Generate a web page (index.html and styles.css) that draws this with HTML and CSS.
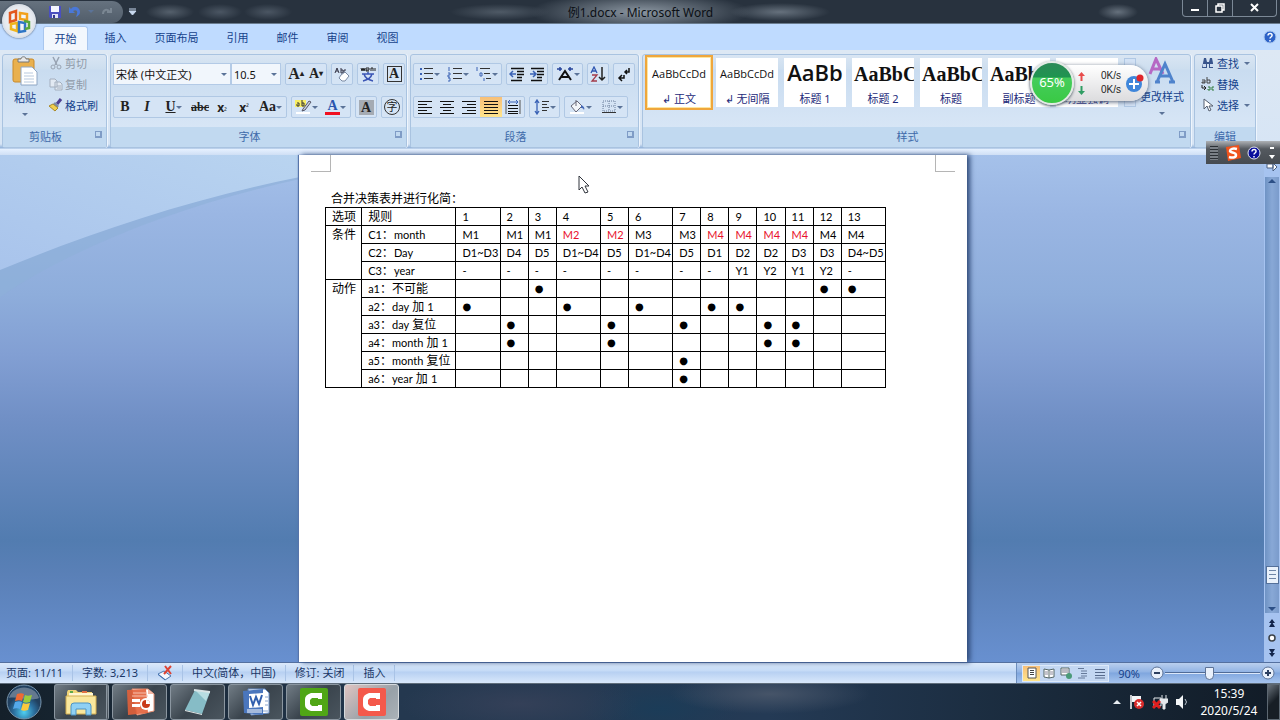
FILE: index.html
```html
<!DOCTYPE html>
<html lang="zh-CN">
<head>
    <meta charset="utf-8">
    <title>例1.docx - Microsoft Word</title>
    <link rel="stylesheet" href="styles.css">
</head>
<body>
<div class="window">

    <header class="titlebar">
        <div class="quick">
            <button class="plain" aria-label="保存"><svg width="14" height="14" viewBox="0 0 14 14"><path d="M1 1h12v12H2l-1-1z" fill="#4a4fc0"/><path d="M3 1h8v6H3z" fill="#f4f6ff"/><path d="M4 9h6v4H4z" fill="#dfe3f5"/><path d="M5 10h2v3H5z" fill="#30358f"/></svg></button>
            <button class="plain" aria-label="撤消"><svg width="14" height="14" viewBox="0 0 14 14"><path d="M1 2v6h6L5 6c3-2 5 0 4 3l-1 3c4-2 5-5 3-8S5 1 3 4z" fill="#4a78d8"/></svg></button>
            <i class="caret"></i>
            <button class="plain redo" aria-label="恢复"><svg width="14" height="14" viewBox="0 0 14 14"><path d="M11 3v4H7M10 7C7 3 3 5 3 9" fill="none" stroke="#7b8793" stroke-width="2"/></svg></button>
        </div>
        <button class="plain more" aria-label="自定义快速访问工具栏"><svg width="9" height="8" viewBox="0 0 9 8"><path d="M1 1h7M1 3h7L4.500 7z" fill="#c8d8ee" stroke="#c8d8ee"/></svg></button>
        <h1 class="title">例1.docx - Microsoft Word</h1>
        <div class="winbtns">
            <button aria-label="最小化"><svg width="12" height="10" viewBox="0 0 12 10"><path d="M2 6h8v2H2z" fill="#fff"/></svg></button>
            <button aria-label="还原"><svg width="12" height="10" viewBox="0 0 12 10"><path d="M4 3V1h6v6H8M2 3h6v6H2z" fill="none" stroke="#fff" stroke-width="1.500"/></svg></button>
            <button class="close" aria-label="关闭"><svg width="12" height="10" viewBox="0 0 12 10"><path d="M2 1l7 7M9 1L2 8" stroke="#fff" stroke-width="2"/></svg></button>
        </div>
    </header>

    <button class="office" aria-label="Office 按钮"><svg width="26" height="26" viewBox="0 0 26 26"><g fill="none" stroke-width="2.500"><path d="M4 5l6-2v9l-6 2z" stroke="#e2571e"/><path d="M14 5l7 1v6l-7-1z" stroke="#f2a11c"/><path d="M5 16l6-1v8l-6-2z" stroke="#f0b51d"/><path d="M13 14l6 1v8l-6 1z" stroke="#2f76c6"/><path d="M18 13l5 1v6l-4 1" stroke="#5aa83a"/></g></svg></button>

    <nav class="tabs">
        <a class="tab active" href="#home">开始</a>
        <a class="tab" href="#insert">插入</a>
        <a class="tab wide" href="#layout">页面布局</a>
        <a class="tab" href="#refs">引用</a>
        <a class="tab" href="#mail">邮件</a>
        <a class="tab" href="#review">审阅</a>
        <a class="tab" href="#view">视图</a>
        <button class="plain help" aria-label="帮助"><svg width="14" height="14" viewBox="0 0 14 14"><circle cx="7" cy="7" r="6" fill="#2c62c8" stroke="#a9c6ee"/><path d="M5 5.500c0-3 4.500-2.500 4 0C9 7 7 7 7 8.500M7 10v1.500" fill="none" stroke="#fff" stroke-width="1.500"/></svg></button>
    </nav>

    <section class="ribbon">
        <div class="group clipboard">
            <div class="body">
                <button class="paste">
                    <svg width="28" height="30" viewBox="0 0 28 30"><rect x="2" y="3" width="21" height="23" rx="2" fill="#e9b04e" stroke="#c98a2b"/><path d="M7 5V3h3c0-3 5-3 5 0h3v3H7z" fill="#e8e8e8" stroke="#777"/><path d="M10 11h11l5 5v13H10z" fill="#fff" stroke="#8ea6c4"/><path d="M13 17h9M13 20h10M13 23h10M13 26h10" stroke="#b8c9de"/></svg>
                    <span>粘贴</span>
                    <i class="caret"></i>
                </button>
                <div class="stack">
                    <button class="line off"><svg width="14" height="14" viewBox="0 0 14 14"><path d="M4 1l4 8M10 1L6 9" stroke="#98a3b2" stroke-width="1.500"/><circle cx="4" cy="11" r="2" fill="none" stroke="#98a3b2"/><circle cx="10" cy="11" r="2" fill="none" stroke="#98a3b2"/></svg>剪切</button>
                    <button class="line off"><svg width="14" height="14" viewBox="0 0 14 14"><path d="M1 2h5l2 2v6H1zM6 5h5l2 2v6H6z" fill="#e2e9f2" stroke="#a4afbe"/><path d="M8 9h4M8 11h4" stroke="#a4afbe"/></svg>复制</button>
                    <button class="line"><svg width="14" height="14" viewBox="0 0 14 14"><path d="M12 1L8 6" stroke="#4d3f91" stroke-width="3"/><path d="M6 4l4 4-2 2-4-4z" fill="#7c8ba6"/><path d="M4 6l5 4-3 3-6-5z" fill="#f0cf50" stroke="#a8892b"/></svg>格式刷</button>
                </div>
            </div>
            <div class="caption"><span>剪贴板</span><i class="launch"></i></div>
        </div>

        <div class="group font">
            <div class="body rows">
                <div class="row">
                    <div class="combos">
                        <label class="combo family"><select aria-label="字体"><option>宋体 (中文正文)</option></select></label>
                        <label class="combo size"><select aria-label="字号"><option>10.5</option></select></label>
                    </div>
                    <div class="set">
                        <button class="tool serif big" aria-label="增大字体">A<sup>▴</sup></button>
                        <button class="tool serif" aria-label="缩小字体">A<sup>▾</sup></button>
                    </div>
                    <div class="set"><button class="tool" aria-label="清除格式"><svg width="16" height="16" viewBox="0 0 16 16"><path d="M1 7l2-5 2 5M2 5h2M7 2v5M7 4h2v3H7M12 4h-2v3h2" fill="none" stroke="#334"/><path d="M7 9l4-3 4 4-4 5H8l-3-3z" fill="#fff" stroke="#7b8ba5"/></svg></button></div>
                    <div class="set"><button class="tool" aria-label="拼音指南"><svg width="16" height="16" viewBox="0 0 16 16"><path d="M1 2l1 3 1-3 1 3 1-3M6 4h3V2H6v3h3M11 5V2h2v3M15 2v3" fill="none" stroke="#222"/><path d="M2 8h12M8 6v2M4 8c1 4 5 6 9 7M12 8c-1 4-5 6-9 7" fill="none" stroke="#3b55b5" stroke-width="1.500"/></svg></button></div>
                    <div class="set"><button class="tool serif" aria-label="字符边框"><span class="boxed">A</span></button></div>
                </div>
                <div class="row">
                    <div class="set chars">
                        <button class="tool serif"><b>B</b></button>
                        <button class="tool serif"><em>I</em></button>
                        <button class="tool serif drop"><u>U</u><i class="caret"></i></button>
                        <button class="tool serif small"><s>abc</s></button>
                        <button class="tool small"><b>x</b><sub>₂</sub></button>
                        <button class="tool small"><b>x</b><sup>²</sup></button>
                        <button class="tool serif drop mid">Aa<i class="caret"></i></button>
                    </div>
                    <div class="set">
                        <button class="tool drop" aria-label="突出显示"><svg width="17" height="16" viewBox="0 0 17 16"><path d="M0 1h11v7H0z" fill="#f8ee63"/><path d="M2 4h2v3H2V5M7 1v6h2V4H7" fill="none" stroke="#333"/><path d="M8 10l6-8 2 1-6 8-3 1z" fill="#c9d2dd" stroke="#556"/><path d="M1 13h14v2H1z" fill="#fff"/></svg><i class="caret"></i></button>
                        <button class="tool serif drop"><span class="inked">A</span><i class="caret"></i></button>
                    </div>
                    <div class="set"><button class="tool serif" aria-label="字符底纹"><span class="shaded">A</span></button></div>
                    <div class="set"><button class="tool" aria-label="带圈字符"><span class="ringed">字</span></button></div>
                </div>
            </div>
            <div class="caption"><span>字体</span><i class="launch"></i></div>
        </div>

        <div class="group para">
            <div class="body rows">
                <div class="row">
                    <div class="set">
                        <button class="tool drop" aria-label="项目符号"><svg width="16" height="16" viewBox="0 0 16 16"><path d="M2 3h2M2 8h2M2 13h2" stroke="#3a62b5" stroke-width="2"/><path d="M6 2.500h9M6 7.500h9M6 12.500h9" stroke="#333"/></svg><i class="caret"></i></button>
                        <button class="tool drop" aria-label="编号"><svg width="16" height="16" viewBox="0 0 16 16"><path d="M2 1v4M1 7h2v2H1v2h2M1 12h2v3H1" fill="none" stroke="#3a62b5"/><path d="M6 2.500h9M6 7.500h9M6 12.500h9" stroke="#333"/></svg><i class="caret"></i></button>
                        <button class="tool drop" aria-label="多级列表"><svg width="16" height="16" viewBox="0 0 16 16"><path d="M1 1v4M4 7h2v3H4zM8 12v3" fill="none" stroke="#3a62b5"/><path d="M4 2.500h10M8 7.500h6M10 12.500h5" stroke="#333"/></svg><i class="caret"></i></button>
                    </div>
                    <div class="set">
                        <button class="tool" aria-label="减少缩进量"><svg width="16" height="16" viewBox="0 0 16 16"><path d="M2 2.500h13M8 5.500h7M8 8.500h7M8 11.500h5M2 14.500h11" stroke="#111" stroke-width="1.500"/><path d="M7 8H1M4 5L1 8l3 3" fill="none" stroke="#3a62b5" stroke-width="1.500"/></svg></button>
                        <button class="tool" aria-label="增加缩进量"><svg width="16" height="16" viewBox="0 0 16 16"><path d="M2 2.500h13M8 5.500h7M8 8.500h7M8 11.500h5M2 14.500h11" stroke="#111" stroke-width="1.500"/><path d="M1 8h6M4 5l3 3-3 3" fill="none" stroke="#3a62b5" stroke-width="1.500"/></svg></button>
                    </div>
                    <div class="set"><button class="tool drop" aria-label="中文版式"><svg width="18" height="16" viewBox="0 0 18 16"><path d="M3 14L9 5l6 9M5 11h8" fill="none" stroke="#111" stroke-width="2"/><path d="M1 3h5M4 1v4M12 3h5M14 1v4" stroke="#26439a" stroke-width="1.500"/></svg><i class="caret"></i></button></div>
                    <div class="set"><button class="tool" aria-label="排序"><svg width="16" height="16" viewBox="0 0 16 16"><path d="M1 7l3-6 3 6M2 5h4" fill="none" stroke="#2e56b0" stroke-width="1.300"/><path d="M2 9h5l-5 6h5" fill="none" stroke="#a23a4a" stroke-width="1.300"/><path d="M12 1v13M9 11l3 3 3-3" fill="none" stroke="#222" stroke-width="1.500"/></svg></button></div>
                    <div class="set"><button class="tool" aria-label="显示编辑标记"><svg width="16" height="16" viewBox="0 0 16 16"><path d="M13 2v4H9M11 4L9 6l2 2M8 9v3H3M6 9l-3 3 3 3" fill="none" stroke="#111" stroke-width="1.500"/></svg></button></div>
                </div>
                <div class="row">
                    <div class="set align">
                        <button class="tool" aria-label="左对齐"><svg width="16" height="16" viewBox="0 0 16 16"><path d="M1 2.500h14M1 5.500h9M1 8.500h14M1 11.500h9M1 14.500h14" stroke="#111"/></svg></button>
                        <button class="tool" aria-label="居中"><svg width="16" height="16" viewBox="0 0 16 16"><path d="M1 2.500h14M4 5.500h8M1 8.500h14M4 11.500h8M1 14.500h14" stroke="#111"/></svg></button>
                        <button class="tool" aria-label="右对齐"><svg width="16" height="16" viewBox="0 0 16 16"><path d="M1 2.500h14M6 5.500h9M1 8.500h14M6 11.500h9M1 14.500h14" stroke="#111"/></svg></button>
                        <button class="tool on" aria-label="两端对齐"><svg width="16" height="16" viewBox="0 0 16 16"><path d="M1 2.500h14M1 5.500h14M1 8.500h14M1 11.500h14M1 14.500h14" stroke="#111"/></svg></button>
                        <button class="tool" aria-label="分散对齐"><svg width="16" height="16" viewBox="0 0 16 16"><path d="M1 1v14M15 1v14" stroke="#555"/><path d="M3 3h10M5 1L3 3l2 2M11 1l2 2-2 2" fill="none" stroke="#3a62b5"/><path d="M3 6.500h10M3 9.500h10M3 12.500h10M3 14.500h10" stroke="#111"/></svg></button>
                    </div>
                    <div class="set"><button class="tool drop" aria-label="行距"><svg width="16" height="16" viewBox="0 0 16 16"><path d="M3 2v12M1 4l2-3 2 3M1 12l2 3 2-3" fill="none" stroke="#3a62b5" stroke-width="1.300"/><path d="M8 2.500h7M8 5.500h5M8 8.500h7M8 11.500h5" stroke="#333"/></svg><i class="caret"></i></button></div>
                    <div class="set align">
                        <button class="tool drop" aria-label="底纹"><svg width="17" height="16" viewBox="0 0 17 16"><path d="M2 7l6-5 5 5-6 6z" fill="#f3f6fa" stroke="#667"/><path d="M7 1v6" stroke="#667"/><path d="M12 6c3 1 4 3 3 5-1-2-2-2-3-2z" fill="#4569b8"/><path d="M1 14h14" stroke="#fff" stroke-width="2"/></svg><i class="caret"></i></button>
                        <button class="tool drop" aria-label="边框"><svg width="16" height="16" viewBox="0 0 16 16"><path d="M2 2h12v10H2zM8 2v10M2 7h12" fill="none" stroke="#6b7f9c" stroke-dasharray="1 1"/><path d="M1 13.500h14" stroke="#333"/></svg><i class="caret"></i></button>
                    </div>
                </div>
            </div>
            <div class="caption"><span>段落</span><i class="launch"></i></div>
        </div>

        <div class="group styles">
            <div class="body">
                <div class="gallery">
                    <button class="style chosen"><span class="sample">AaBbCcDd</span><span>↲ 正文</span></button>
                    <button class="style"><span class="sample">AaBbCcDd</span><span>↲ 无间隔</span></button>
                    <button class="style"><span class="sample h-one">AaBb</span><span>标题 1</span></button>
                    <button class="style"><span class="sample h-two">AaBbC</span><span>标题 2</span></button>
                    <button class="style"><span class="sample h-two">AaBbC</span><span>标题</span></button>
                    <button class="style"><span class="sample h-two">AaBbC</span><span>副标题</span></button>
                    <button class="style"><span class="sample"></span><span>明显强调</span></button>
                    <div class="scroller"></div>
                </div>
                <button class="change">
                    <svg width="28" height="28" viewBox="0 0 28 28"><path d="M2 17L8 2l7 15M4 12h8" fill="none" stroke="#b668c4" stroke-width="3"/><path d="M9 25l8-18 8 18M12 19h10M7 25h5M21 25h6" fill="none" stroke="#4f83cc" stroke-width="3"/></svg>
                    <span>更改样式</span>
                    <i class="caret"></i>
                </button>
            </div>
            <div class="caption"><span>样式</span><i class="launch"></i></div>
        </div>

        <div class="group edit">
            <div class="body">
                <div class="stack">
                    <button class="line"><svg width="14" height="14" viewBox="0 0 14 14"><path d="M2 7l1-5h2l1 4h2l1-4h2l1 5v5H8V8H6v4H1z" fill="#39558c"/><path d="M2 8h3v3H2zM9 8h3v3H9z" fill="#cfdcf0"/></svg>查找<i class="caret"></i></button>
                    <button class="line"><svg width="14" height="14" viewBox="0 0 14 14"><path d="M1 3h3v3H1V5h3M6 0v6h3V3H6" fill="none" stroke="#444"/><path d="M1 8v3h3M3 9l2 2-2 2" fill="none" stroke="#222"/><path d="M7 10h2v3H7v-1M13 10h-2v3h2" fill="none" stroke="#2f7a3c"/></svg>替换</button>
                    <button class="line"><svg width="14" height="14" viewBox="0 0 14 14"><path d="M3 1v10l3-3 2 5 2-1-2-4h4z" fill="#fff" stroke="#555f70"/></svg>选择<i class="caret"></i></button>
                </div>
            </div>
            <div class="caption"><span>编辑</span></div>
        </div>
    </section>

    <main class="desk">
        <div class="canvas">
            <svg class="swoosh" width="300" height="142" viewBox="0 0 300 142"><defs><linearGradient id="sw" x1="0" y1="1" x2="1" y2="0"><stop offset="0" stop-color="#a9c4ec"/><stop offset="1" stop-color="#b9d4f0"/></linearGradient></defs><path d="M0 0h300v24C190 48 80 88 0 142z" fill="#8db0d8" opacity=".6"/><path d="M0 0h300v22C190 44 90 78 0 115z" fill="url(#sw)"/></svg>
            <article class="page">
                <div class="crops"><i class="crop left"></i><i class="crop right"></i></div>
                <p class="lead">合并决策表并进行化简：</p>
                <table class="decision">
                    <colgroup>
                        <col class="c-head"><col class="c-rule"><col class="c-wide"><col><col><col class="c-wide"><col><col class="c-wide"><col><col><col><col><col><col><col class="c-wide">
                    </colgroup>
                    <tbody>
                        <tr><th>选项</th><th>规则</th><td>1</td><td>2</td><td>3</td><td>4</td><td>5</td><td>6</td><td>7</td><td>8</td><td>9</td><td>10</td><td>11</td><td>12</td><td>13</td></tr>
                        <tr><th rowspan="3">条件</th><th><span>C1</span>：<span>month</span></th><td>M1</td><td>M1</td><td>M1</td><td class="red">M2</td><td class="red">M2</td><td>M3</td><td>M3</td><td class="red">M4</td><td class="red">M4</td><td class="red">M4</td><td class="red">M4</td><td>M4</td><td>M4</td></tr>
                        <tr><th><span>C2</span>：<span>Day</span></th><td>D1~D3</td><td>D4</td><td>D5</td><td>D1~D4</td><td>D5</td><td>D1~D4</td><td>D5</td><td>D1</td><td>D2</td><td>D2</td><td>D3</td><td>D3</td><td>D4~D5</td></tr>
                        <tr><th><span>C3</span>：<span>year</span></th><td>-</td><td>-</td><td>-</td><td>-</td><td>-</td><td>-</td><td>-</td><td>-</td><td>Y1</td><td>Y2</td><td>Y1</td><td>Y2</td><td>-</td></tr>
                        <tr><th rowspan="6">动作</th><th><span>a1</span>：不可能</th><td></td><td></td><td class="dot">●</td><td></td><td></td><td></td><td></td><td></td><td></td><td></td><td></td><td class="dot">●</td><td class="dot">●</td></tr>
                        <tr><th><span>a2</span>：<span>day</span> 加 <span>1</span></th><td class="dot">●</td><td></td><td></td><td class="dot">●</td><td></td><td class="dot">●</td><td></td><td class="dot">●</td><td class="dot">●</td><td></td><td></td><td></td><td></td></tr>
                        <tr><th><span>a3</span>：<span>day</span> 复位</th><td></td><td class="dot">●</td><td></td><td></td><td class="dot">●</td><td></td><td class="dot">●</td><td></td><td></td><td class="dot">●</td><td class="dot">●</td><td></td><td></td></tr>
                        <tr><th><span>a4</span>：<span>month</span> 加 <span>1</span></th><td></td><td class="dot">●</td><td></td><td></td><td class="dot">●</td><td></td><td></td><td></td><td></td><td class="dot">●</td><td class="dot">●</td><td></td><td></td></tr>
                        <tr><th><span>a5</span>：<span>month</span> 复位</th><td></td><td></td><td></td><td></td><td></td><td></td><td class="dot">●</td><td></td><td></td><td></td><td></td><td></td><td></td></tr>
                        <tr><th><span>a6</span>：<span>year</span> 加 <span>1</span></th><td></td><td></td><td></td><td></td><td></td><td></td><td class="dot">●</td><td></td><td></td><td></td><td></td><td></td><td></td></tr>
                    </tbody>
                </table>
            </article>
        </div>
        <div class="scrollbar">
            <button class="plain" aria-label="标尺"><svg width="12" height="12" viewBox="0 0 12 12"><path d="M1 4h6v4H1zM7 3l4 4-4 4z" fill="#fff" stroke="#4a5f80"/></svg></button>
            <div class="track">
                <button class="plain" aria-label="向上滚动"><svg width="12" height="8" viewBox="0 0 12 8"><path d="M6 2l4 4H2z" fill="#2c4f86"/></svg></button>
                <i class="thumb"></i>
                <button class="plain" aria-label="向下滚动"><svg width="12" height="8" viewBox="0 0 12 8"><path d="M6 6l4-4H2z" fill="#2c4f86"/></svg></button>
            </div>
            <button class="plain" aria-label="前一页"><svg width="10" height="10" viewBox="0 0 10 10"><path d="M5 1l3 4H2zM5 4l3 5H2z" fill="#12244a"/></svg></button>
            <button class="plain" aria-label="选择浏览对象"><svg width="10" height="10" viewBox="0 0 10 10"><circle cx="5" cy="5" r="3" fill="#fff" stroke="#3a4047" stroke-width="1.500"/></svg></button>
            <button class="plain" aria-label="下一页"><svg width="10" height="10" viewBox="0 0 10 10"><path d="M5 9l3-4H2zM5 6l3-5H2z" fill="#12244a"/></svg></button>
        </div>
    </main>

    <footer class="status">
        <span class="cell">页面: 11/11</span>
        <span class="cell">字数: 3,213</span>
        <span class="cell"><svg width="16" height="16" viewBox="0 0 16 16"><path d="M1 9l6-3 7 5-6 4z" fill="#f4f8ff" stroke="#4d78ae"/><path d="M1 10l7 5v-1L1 9z" fill="#3a6db1"/><path d="M8 1l6 8M14 1L7 9" stroke="#dd4334" stroke-width="2"/></svg></span>
        <span class="cell">中文(简体，中国)</span>
        <span class="cell">修订: 关闭</span>
        <span class="cell">插入</span>
        <div class="tail">
            <div class="views">
                <button class="view on" aria-label="页面视图"><svg width="12" height="12" viewBox="0 0 12 12"><path d="M2 1h8v10H2z" fill="#fff" stroke="#555"/><path d="M4 3.500h4M4 5.500h4M4 7.500h4" stroke="#444"/></svg></button>
                <button class="view" aria-label="阅读版式"><svg width="12" height="12" viewBox="0 0 12 12"><path d="M1 2l5 1 5-1v8l-5 1-5-1zM6 3v8" fill="#fff" stroke="#566"/><path d="M2 5h3M2 7h3M7 5h3M7 7h3" stroke="#889"/></svg></button>
                <button class="view" aria-label="Web 版式"><svg width="12" height="12" viewBox="0 0 12 12"><path d="M1 1h8v7H1z" fill="#fff" stroke="#566"/><path d="M2 3h6M2 5h6" stroke="#778"/><circle cx="9" cy="9" r="3" fill="#4a9a78"/></svg></button>
                <button class="view" aria-label="大纲视图"><svg width="12" height="12" viewBox="0 0 12 12"><path d="M1 1.500h6M4 4h6M4 6.500h6M4 9h6M1 11h7" stroke="#667a9a"/></svg></button>
                <button class="view" aria-label="普通视图"><svg width="12" height="12" viewBox="0 0 12 12"><path d="M1 2.500h10M1 5.500h10M1 8.500h10M1 11h10" stroke="#566a8c"/></svg></button>
            </div>
            <span class="percent">90%</span>
            <button class="plain" aria-label="缩小"><svg width="16" height="16" viewBox="0 0 16 16"><circle cx="8" cy="8" r="6" fill="#e8f0fb" stroke="#5d7396"/><path d="M5 8h6" stroke="#2c3f60" stroke-width="2"/></svg></button>
            <input class="zoom" type="range" min="10" max="180" value="90" aria-label="显示比例">
            <button class="plain" aria-label="放大"><svg width="16" height="16" viewBox="0 0 16 16"><circle cx="8" cy="8" r="6" fill="#e8f0fb" stroke="#5d7396"/><path d="M5 8h6M8 5v6" stroke="#2c3f60" stroke-width="2"/></svg></button>
        </div>
    </footer>

    <div class="taskbar">
        <button class="plain start" aria-label="开始菜单"><svg width="38" height="36" viewBox="0 0 38 36"><defs><radialGradient id="orb" cy=".8"><stop offset="0" stop-color="#4fd0f2"/><stop offset=".6" stop-color="#2b6f9f"/><stop offset="1" stop-color="#21405f"/></radialGradient></defs><circle cx="19" cy="18" r="17" fill="url(#orb)" stroke="#7895ad"/><path d="M4 14C8 0 30 0 34 14 26 18 12 12 4 14z" fill="#fff" opacity=".3"/><path d="M12 10c3-1 5-1 7 0l-2 7c-2-1-4-1-7 0z" fill="#ee6a34"/><path d="M20 11c2 1 4 1 7 0l-2 7c-3 1-5 1-7 0z" fill="#9bcc3c"/><path d="M10 18c3-1 5-1 7 0l-2 7c-2-1-5-1-7 0z" fill="#54a9ea"/><path d="M18 19c2 1 4 1 7 0l-2 7c-3 1-5 1-7 0z" fill="#fbc93c"/></svg></button>
        <div class="apps">
            <button class="app double" aria-label="资源管理器"><svg width="32" height="30" viewBox="0 0 32 30"><path d="M2 5l1-2h8l2 2h14v20H2z" fill="#f0d477"/><path d="M4 6h24v4H4z" fill="#fff6d0"/><path d="M5 4h3v2H5z" fill="#5ea94b"/><path d="M17 4h5v2h-5z" fill="#e07044"/><path d="M1 9h30v18H1z" fill="#f9e79d" stroke="#d2ad50"/><path d="M6 28v-9q0-3 3-3h14q3 0 3 3v9h-5v-6H11v6z" fill="#8fd0f4" stroke="#4c93c4"/></svg></button>
            <button class="app" aria-label="PowerPoint"><svg width="32" height="30" viewBox="0 0 32 30"><path d="M8 2h16l6 5v17l-17 4z" fill="#fff" stroke="#e58d70"/><path d="M24 2v5h6z" fill="#f3b7a3"/><path d="M3 3l19-1 2 24L4 28z" fill="#e2603a" opacity=".9"/><path d="M9 6h14M8 9h16" stroke="#f6c0ae"/><path d="M8 12h8v3H8zM8 17h8v3H8z" fill="#fff"/><circle cx="22" cy="17" r="6" fill="#fff"/><circle cx="22" cy="17" r="4" fill="#c93a1a"/><path d="M22 17v-4a4 4 0 0 1 4 4z" fill="#fff"/></svg></button>
            <button class="app" aria-label="记事本"><svg width="32" height="30" viewBox="0 0 32 30"><path d="M13 3l15 2-8 22-17-4z" fill="#86bcc6"/><path d="M13 3l15 2-4 9z" fill="#b7dde2"/><path d="M3 23l17 4v1L3 24z" fill="#e2e9ea"/><path d="M12 3l16 2" stroke="#d9e4e6" stroke-width="2"/></svg></button>
            <button class="app" aria-label="Word"><svg width="32" height="30" viewBox="0 0 32 30"><path d="M8 2h17l4 4v20l-18 2z" fill="#fff" stroke="#688ec8"/><path d="M25 10h3M25 14h3M25 18h3M14 24h14" stroke="#88a4cf"/><path d="M3 4l20-2v26L4 26z" fill="#4a76bd"/><path d="M9 7l14-1v14l-14 1z" fill="#fff"/><path d="M10 9l3 9 3-8 3 7 3-9" fill="none" stroke="#315fae" stroke-width="2"/><path d="M7 23h15M7 25h15" stroke="#fff"/></svg></button>
            <button class="app" aria-label="Camtasia"><svg width="32" height="30" viewBox="0 0 32 30"><rect x="2" y="1" width="28" height="28" rx="2" fill="#50a616"/><path d="M24 6v6h-4v-1H14l-2 2v4l2 2h6v-1h4v6H13q-6-2-6-6v-6q0-4 6-6z" fill="#fff"/></svg></button>
            <button class="app current" aria-label="Camtasia 录像机"><svg width="32" height="30" viewBox="0 0 32 30"><rect x="2" y="1" width="28" height="28" rx="2" fill="#f4594b"/><path d="M24 6v6h-4v-1H14l-2 2v4l2 2h6v-1h4v6H13q-6-2-6-6v-6q0-4 6-6z" fill="#fff"/></svg></button>
        </div>
        <div class="tray">
            <svg width="10" height="8" viewBox="0 0 10 8"><path d="M5 2l4 4H1z" fill="#e8edf2"/></svg>
            <svg width="16" height="16" viewBox="0 0 16 16"><path d="M2 1v14" stroke="#fff" stroke-width="1.500"/><path d="M3 2h9v6H3z" fill="#f4f6f8"/><circle cx="10" cy="10" r="5" fill="#d92c2c"/><path d="M8 8l4 4M12 8l-4 4" stroke="#fff" stroke-width="1.500"/></svg>
            <svg width="16" height="16" viewBox="0 0 16 16"><path d="M2 4h7v8H2z" fill="none" stroke="#e4e8ec"/><path d="M10 1v4M14 1v4M8 5h8v3l-3 2v5h-2v-5L8 8z" fill="#e4e8ec" stroke="#e4e8ec"/><path d="M1 7l7 7M8 7l-7 7" stroke="#e11e1e" stroke-width="3"/></svg>
            <svg width="16" height="16" viewBox="0 0 16 16"><path d="M1 5h3l4-4v14l-4-4H1z" fill="#f4f6f8"/><path d="M10 5q3 3 0 6" fill="none" stroke="#b9c3cc"/></svg>
        </div>
        <div class="clock"><span>15:39</span><span>2020/5/24</span></div>
        <button class="peek" aria-label="显示桌面"></button>
    </div>

    <!-- network speed widget -->
    <div class="speed">
        <span class="ball">65%</span>
        <div class="rates">
            <span><svg width="7" height="9" viewBox="0 0 7 9"><path d="M3.500 0L7 4H4.500v5h-2V4H0z" fill="#e84b4b"/></svg>0K/s</span>
            <span><svg width="7" height="9" viewBox="0 0 7 9"><path d="M3.500 9L7 5H4.500V0h-2v5H0z" fill="#2f9d63"/></svg>0K/s</span>
        </div>
        <button class="plain" aria-label="加速"><svg width="20" height="20" viewBox="0 0 20 20"><circle cx="9" cy="11" r="8" fill="#3f86da"/><path d="M4 11h10M9 6v10" stroke="#fff" stroke-width="2"/><circle cx="15" cy="5" r="3.500" fill="#e0262b"/></svg></button>
    </div>

    <!-- input method bar -->
    <div class="ime">
        <i class="grip"></i>
        <svg width="16" height="16" viewBox="0 0 16 16"><path d="M1 2l13-2 2 13-13 3z" fill="#f0531c"/><path d="M12 4C8 3 5 4 5 6s6 1 6 4-4 3-7 2" fill="none" stroke="#fff" stroke-width="2.500"/></svg>
        <svg width="14" height="14" viewBox="0 0 14 14"><circle cx="7" cy="7" r="6" fill="#0a0f9c" stroke="#dfe3f0"/><path d="M5 5.500c0-3 4.500-2.500 4 0C9 7 7 7 7 8.500M7 10v1.500" fill="none" stroke="#fff" stroke-width="1.500"/></svg>
        <svg width="8" height="16" viewBox="0 0 8 16"><path d="M2 3h4" stroke="#fff" stroke-width="2"/><path d="M1 10h6l-3 4z" fill="#fff"/></svg>
    </div>

    <svg class="pointer" width="14" height="20" viewBox="0 0 14 20"><path d="M2 1v14l3-3 3 6 3-1-3-6h4z" fill="#fff" stroke="#30343c"/></svg>
</div>
</body>
</html>
```
FILE: styles.css
```css
* {
    box-sizing: border-box;
}

body {
    margin: 0;
    font-family: "Noto Sans", "Noto Sans CJK SC", sans-serif;
    font-size: 11px;
    color: #15428b;
}

button {
    font: inherit;
    color: inherit;
    background: none;
    border: 0;
    padding: 0;
}

svg {
    display: block;
    flex: none;
}

.window {
    position: relative;
    display: flex;
    flex-direction: column;
    height: 100vh;
    overflow: hidden;
}

.plain {
    display: flex;
    align-items: center;
    justify-content: center;
}

.caret {
    border: 3px solid transparent;
    border-top-color: #5b7398;
    border-bottom: 0;
}

/* title bar */

.titlebar {
    flex: none;
    display: flex;
    align-items: center;
    height: 24px;
    background:
        radial-gradient(ellipse 24px 8px at 170px 12px, #55606c, transparent),
        radial-gradient(ellipse 22px 8px at 220px 12px, #4b5663, transparent),
        radial-gradient(ellipse 24px 8px at 268px 12px, #4b5663, transparent),
        radial-gradient(ellipse 50px 8px at 500px 12px, #4f5a66, transparent),
        radial-gradient(ellipse 110px 20px at 640px 12px, #8b96a1, transparent),
        radial-gradient(ellipse 50px 9px at 780px 12px, #66717d, transparent),
        radial-gradient(ellipse 20px 8px at 1118px 12px, #66717d, transparent),
        #28323e;
    border-bottom: 1px solid #6a7c8e;
}

.quick {
    display: flex;
    align-items: center;
    gap: 6px;
    width: 123px;
    height: 22px;
    padding-left: 48px;
    border-radius: 0 11px 11px 0;
    background: linear-gradient(#66727f, #515d6a);
}

.more {
    margin-left: 5px;
}

.title {
    flex: 1;
    margin: 0;
    padding-right: 38px;
    text-align: center;
    font-size: 12px;
    font-weight: 400;
    color: #0b0f14;
}

.winbtns {
    display: flex;
    align-self: flex-start;
    height: 17px;
    margin-right: 3px;
    border: 1px solid #7b8896;
    border-top: 0;
    border-radius: 0 0 4px 4px;
}

.winbtns button {
    display: flex;
    align-items: center;
    justify-content: center;
    width: 25px;
    border-right: 1px solid #7b8896;
}

.winbtns .close {
    width: 43px;
    border: 0;
}

.office {
    position: absolute;
    left: 2px;
    top: 4px;
    z-index: 2;
    display: flex;
    align-items: center;
    justify-content: center;
    width: 34px;
    height: 34px;
    border-radius: 50%;
    background: radial-gradient(#fff, #e4e8ee 60%, #b3bdc9);
    box-shadow: 0 0 2px #2b3b52;
}

/* tabs */

.tabs {
    flex: none;
    display: flex;
    align-items: flex-end;
    height: 26px;
    padding-left: 43px;
    background: #bfdbff;
}

.tab {
    width: 45px;
    margin-right: 5px;
    height: 24px;
    line-height: 23px;
    text-align: center;
    color: #15428b;
    text-decoration: none;
}

.tab.wide {
    width: 67px;
}

.tab.active {
    background: #f2f7fd;
    border: 1px solid #a8c6ee;
    border-bottom: 0;
    border-radius: 3px 3px 0 0;
}

.help {
    margin: 0 3px 6px auto;
}

/* ribbon */

.ribbon {
    flex: none;
    display: flex;
    gap: 3px;
    height: 105px;
    padding: 4px 24px 7px 2px;
    background: linear-gradient(#dde8f4, #d7e5f5 94px, #8fb0d8 98px, #e6f1ff 99px, #cfdff5);
}

.group {
    display: flex;
    flex-direction: column;
    border: 1px solid #a9c3e0;
    border-radius: 3px;
    box-shadow: 1px 0 #eef5fd;
    background: linear-gradient(#d9e5f3, #cddeef 14px, #c9dcf0 15px, #dce9f8);
}

.clipboard {
    width: 105px;
}

.font {
    width: 297px;
}

.para {
    width: 229px;
}

.styles {
    flex: 1;
    min-width: 0;
}

.edit {
    width: 62px;
}

.body {
    flex: 1;
    display: flex;
    min-height: 0;
}

.caption {
    position: relative;
    height: 20px;
    padding-right: 18px;
    line-height: 19px;
    text-align: center;
    color: #3e6aaa;
    background: #c1d9f0;
}

.edit .caption {
    padding-right: 0;
}

.launch {
    position: absolute;
    right: 4px;
    top: 4px;
    width: 7px;
    height: 7px;
    border: 1px solid #7f9cc6;
    border-right-width: 2px;
    border-bottom-width: 2px;
}

.paste {
    display: flex;
    flex-direction: column;
    align-items: center;
    width: 44px;
    gap: 4px;
    padding-top: 1px;
    line-height: 16px;
}

.stack {
    display: flex;
    flex-direction: column;
    gap: 5px;
    padding-left: 2px;
}

.line {
    display: flex;
    align-items: center;
    gap: 2px;
    height: 16px;
    white-space: nowrap;
}

.line .caret {
    margin-left: 3px;
}

.off {
    color: #8f9aa8;
}

.edit .stack {
    padding-left: 6px;
}

.rows {
    flex-direction: column;
    gap: 11px;
    padding: 8px 3px 0 2px;
}

.row {
    display: flex;
    gap: 4px;
}

.font .row {
    justify-content: space-between;
}

.set {
    display: flex;
    height: 22px;
    border: 1px solid #b0c8e4;
    border-radius: 2px;
    background: #d5e4f5;
}

.combos {
    display: flex;
    height: 22px;
}

.combo {
    position: relative;
    border: 1px solid #b3cae6;
    background: #f1f6fc;
}

.combo::after {
    content: "";
    position: absolute;
    right: 3px;
    top: 9px;
    border: 3px solid transparent;
    border-top-color: #5b7398;
    border-bottom: 0;
}

.family {
    width: 118px;
}

.size {
    width: 50px;
}

.combo select {
    width: 100%;
    height: 20px;
    padding: 0 2px;
    border: 0;
    background: none;
    appearance: none;
    font: inherit;
    font-size: 11px;
    color: #111;
}

.tool {
    display: flex;
    align-items: center;
    justify-content: center;
    width: 20px;
    color: #222;
}

.drop {
    width: 29px;
}

.chars .tool, .align .tool {
    width: 22px;
}

.chars .drop, .align .drop {
    width: 31px;
}

.serif {
    font-family: "Liberation Serif", serif;
    font-size: 14px;
    font-weight: 700;
}

.small {
    font-size: 12px;
}

.tool sup, .tool sub {
    font-size: 8px;
    line-height: 8px;
}

.big {
    font-size: 16px;
}

.boxed {
    width: 15px;
    line-height: 14px;
    border: 1px solid #333;
}

.shaded {
    width: 15px;
    line-height: 15px;
    background: #a5abb3;
}

.ringed {
    width: 16px;
    line-height: 14px;
    border: 1px solid #333;
    border-radius: 50%;
}

.inked {
    width: 15px;
    line-height: 13px;
    color: #2b55ae;
    border-bottom: 3px solid #f01020;
}

.on {
    background: linear-gradient(#f7bf78, #ffe58c);
}

/* style gallery */

.gallery {
    display: flex;
    gap: 6px;
    padding: 3px 0 0 5px;
    height: 54px;
}

.style {
    display: flex;
    flex-direction: column;
    flex: none;
    justify-content: space-between;
    width: 62px;
    height: 49px;
    overflow: hidden;
    background: #fff;
    line-height: 16px;
    color: #1d2a7a;
}

.chosen {
    outline: 2px solid #efa63c;
    outline-offset: 1px;
    box-shadow: 0 0 0 1px #fde6a0;
}

.sample {
    height: 32px;
    line-height: 32px;
    white-space: nowrap;
    font-family: "Open Sans", sans-serif;
    font-size: 11px;
    color: #111;
}

.h-one {
    font-size: 22px;
    font-weight: 600;
    line-height: 28px;
}

.h-two {
    padding: 0 2px;
    font-family: "Liberation Serif", serif;
    font-size: 20px;
    font-weight: 700;
}

.scroller {
    width: 12px;
    height: 49px;
    background: #d3e2f5;
    border: 1px solid #b0c8e4;
}

.change {
    display: flex;
    flex-direction: column;
    align-items: center;
    gap: 4px;
    width: 50px;
    margin-left: auto;
    margin-right: 3px;
    padding-top: 2px;
    line-height: 16px;
    white-space: nowrap;
}

.paste .caret, .change .caret {
    margin-top: 3px;
}

/* document */

.desk {
    flex: 1;
    display: flex;
    min-height: 0;
    background: linear-gradient(#a5c1ea, #9ab6e3 60px, #8eaddb 140px, #829fd3 200px, #7190c6 262px, #527cb0 385px, #5a80b7 420px, #6890d0);
}

.canvas {
    position: relative;
    flex: 1;
    display: flex;
    justify-content: center;
    padding-left: 2px;
}

.swoosh {
    position: absolute;
    left: 0;
    top: 0;
}

.page {
    position: relative;
    width: 668px;
    background: #fff;
    box-shadow: 3px 0 5px #2f4a78, -1px 0 1px #5b7ab0;
    padding: 0 26px;
    color: #000;
}

.crops {
    display: flex;
    justify-content: space-between;
    margin: 0 -14px;
}

.crop {
    width: 20px;
    height: 17px;
    border-bottom: 1px solid #b5b5b5;
}

.crop.left {
    border-right: 1px solid #b5b5b5;
}

.crop.right {
    border-left: 1px solid #b5b5b5;
}

.lead {
    margin: 19px 0 0 6px;
    line-height: 16px;
    font-size: 12px;
}

.decision {
    width: 561px;
    table-layout: fixed;
    border-collapse: collapse;
    font-family: Lato, "Noto Sans CJK SC", sans-serif;
}

.decision col {
    width: 28px;
}

.decision .c-head {
    width: 36px;
}

.decision .c-rule {
    width: 94px;
}

.decision .c-wide {
    width: 44px;
}

.decision th, .decision td {
    height: 18px;
    padding: 0 0 0 6px;
    border: 1px solid #000;
    line-height: 17px;
    text-align: left;
    vertical-align: top;
    white-space: nowrap;
}

.decision th {
    font-size: 12px;
    font-weight: 400;
}

.decision th span {
    font-size: 11px;
}

.decision td {
    font-size: 11px;
}

.decision .red {
    color: #e8112d;
}

.decision .dot {
    font-family: "DejaVu Sans", sans-serif;
    font-size: 10px;
}

/* scroll bar */

.scrollbar {
    width: 16px;
    display: flex;
    flex-direction: column;
    align-items: center;
    gap: 5px;
    padding: 5px 0 4px;
    background: #a6c3f0;
}

.track {
    flex: 1;
    display: flex;
    flex-direction: column;
    align-items: center;
    justify-content: space-between;
    width: 14px;
    background: linear-gradient(90deg, #6f93c4, #88a8d6, #7a9bcb);
}

.thumb {
    width: 13px;
    height: 18px;
    margin: auto 0 21px;
    border: 1px solid #54709a;
    background: repeating-linear-gradient(#e9f1fb 0 3px, #6f86a8 3px 4px);
    box-shadow: inset 0 0 0 2px #e9f1fb;
}

/* status bar */

.status {
    flex: none;
    display: flex;
    align-items: center;
    height: 21px;
    border-top: 1px solid #54709f;
    background: linear-gradient(#dbe9fb, #c4daf6 8px, #b7d0f2 9px, #d9e8fb);
}

.cell {
    height: 16px;
    padding: 0 9px;
    line-height: 16px;
    color: #1a3766;
    white-space: nowrap;
    border-right: 1px solid #a9c3e6;
}

.cell:first-child {
    padding-left: 6px;
}

.tail {
    display: flex;
    align-items: center;
    height: 20px;
    margin-left: auto;
    padding: 0 4px 0 5px;
    border-left: 1px solid #6c8dbc;
    background: linear-gradient(#b9cfee, #91b3e4 9px, #7fa6de 10px, #a6c4ee);
}

.views {
    display: flex;
    border: 1px solid #dce9fa;
    background: #c3d7f2;
}

.view {
    display: flex;
    align-items: center;
    justify-content: center;
    width: 17px;
    height: 15px;
}

.percent {
    width: 40px;
    text-align: center;
}

.zoom {
    appearance: none;
    width: 95px;
    height: 16px;
    margin: 0;
    background: linear-gradient(transparent 7px, #4f6b96 7px 8px, #dbe8fa 8px 9px, transparent 9px);
}

.zoom::-webkit-slider-thumb {
    appearance: none;
    width: 9px;
    height: 13px;
    border: 1px solid #5d7396;
    border-radius: 0 0 5px 5px;
    background: #e8f0fb;
}

/* task bar */

.taskbar {
    flex: none;
    display: flex;
    align-items: center;
    height: 37px;
    border-top: 1px solid #5f6d7b;
    background:
        radial-gradient(ellipse 100px 20px at 770px 10px, #465468, transparent),
        radial-gradient(ellipse 120px 30px at 520px 20px, #344058, transparent),
        radial-gradient(ellipse 80px 30px at 660px 25px, #1b3c58, transparent),
        linear-gradient(90deg, #14202a, #24384f 400px, #243a55 60%, #1a2b3d 80%, #111b26);
}

.start {
    width: 54px;
    padding-right: 6px;
}

.apps {
    flex: 1;
    display: flex;
    gap: 3px;
}

.app {
    display: flex;
    align-items: center;
    justify-content: center;
    width: 55px;
    height: 36px;
    border: 1px solid #8b96a0;
    border-radius: 3px;
    background: linear-gradient(135deg, #717c85, #3a444d 50%, #4a555e);
}

.double {
    border-right-width: 3px;
    border-right-style: double;
}

.current {
    border-color: #d6dadd;
    background: linear-gradient(135deg, #e0c4c2, #98a1a8 60%, #abb2b8);
}

.tray {
    display: flex;
    align-items: center;
    gap: 7px;
}

.clock {
    display: flex;
    flex-direction: column;
    align-items: center;
    width: 76px;
    font-size: 12px;
    line-height: 17px;
    color: #fff;
}

.peek {
    width: 13px;
    height: 36px;
    border: 1px solid #5d6872;
    background: linear-gradient(135deg, #6a737c, #171e25 50%);
}

/* floating things */

.speed {
    position: absolute;
    right: 132px;
    top: 65px;
    z-index: 3;
    display: flex;
    align-items: center;
    width: 116px;
    height: 36px;
    padding-right: 3px;
    border-radius: 18px;
    background: linear-gradient(#fff, #dcdcde);
    box-shadow: 0 1px 4px #56637a;
    color: #222;
}

.ball {
    flex: none;
    width: 44px;
    height: 44px;
    margin-left: -2px;
    border: 2px solid #e3eae5;
    border-radius: 50%;
    background: linear-gradient(#2c8a58, #1f9450 14px, #45cd5c 15px, #39c944);
    box-shadow: 0 1px 3px #45525f;
    font-size: 13px;
    line-height: 38px;
    text-align: center;
    color: #fff;
}

.rates {
    flex: 1;
    display: flex;
    flex-direction: column;
    font-family: "Liberation Sans", sans-serif;
    font-size: 10px;
    line-height: 14px;
}

.rates span {
    display: flex;
    align-items: center;
    justify-content: space-between;
    padding: 0 4px;
}

.ime {
    position: absolute;
    right: 0;
    top: 141px;
    z-index: 3;
    display: flex;
    align-items: center;
    justify-content: space-between;
    width: 74px;
    height: 23px;
    padding: 0 4px;
    background: linear-gradient(#aeb1b5, #54595f 8px, #464b51);
}

.grip {
    width: 8px;
    height: 14px;
    background: repeating-linear-gradient(#2c3036 0 1px, #7b8087 1px 3px);
}

.pointer {
    position: absolute;
    left: 577px;
    top: 175px;
    z-index: 3;
}
```
